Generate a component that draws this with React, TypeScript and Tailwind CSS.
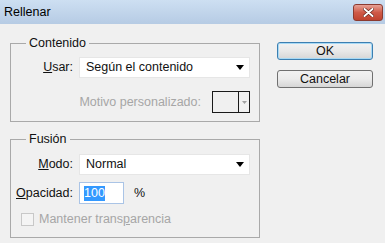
const font = { fontFamily: '"Liberation Sans", Arial, sans-serif' };

function Arrow() {
  return (
    <svg width="8" height="5" viewBox="0 0 8 5" className="shrink-0">
      <path d="M0 0 H8 L4 5 Z" fill="#000" />
    </svg>
  );
}

function Dropdown({ value }: { value: string }) {
  return (
    <div className="flex h-[21px] w-[171px] shrink-0 items-center justify-between border border-[#e6e6e6] bg-white pl-[6px] pr-[5px] text-[12.5px] text-[#111]">
      <span>{value}</span>
      <Arrow />
    </div>
  );
}

function Label({ children }: { children: React.ReactNode }) {
  return <span className="w-[60px] shrink-0 whitespace-nowrap text-right">{children}</span>;
}

function Group({ title, children }: { title: string; children: React.ReactNode }) {
  return (
    <fieldset className="w-[250px] border border-[#a9a9a9] pb-[8px] pl-[2px] pr-[9px]">
      <legend className="ml-[13px] px-[3px] text-[12.5px] leading-[14px] text-[#111]">{title}</legend>
      {children}
    </fieldset>
  );
}

export default function App() {
  return (
    <div className="h-[243px] w-[385px] overflow-hidden bg-[#f0f0f0] text-[12.5px] text-[#111]" style={font}>
      <div className="flex h-[24px] items-center justify-between bg-gradient-to-b from-[#cddff2] to-[#b6cbe4] pl-[4px] pr-[2px]">
        <span className="text-[12.5px] text-black">Rellenar</span>
        <div className="flex h-[17px] w-[30px] items-center justify-center rounded-[3px] border border-[#8b3a30] bg-gradient-to-b from-[#e6a196] via-[#cf5a48] to-[#c0432f]">
          <svg width="11" height="9" viewBox="0 0 11 9">
            <path d="M1.5 1 L9.5 8 M9.5 1 L1.5 8" stroke="#5a1c14" strokeWidth="3.2" strokeLinecap="round" />
            <path d="M1.5 1 L9.5 8 M9.5 1 L1.5 8" stroke="#fff" strokeWidth="2" strokeLinecap="round" />
          </svg>
        </div>
      </div>

      <div className="flex pl-[10px] pt-[12px]">
        <div className="flex flex-col gap-[10px]">
          <Group title="Contenido">
            <div className="mt-[7px] flex items-center gap-[6px]">
              <Label>
                <span className="underline">U</span>sar:
              </Label>
              <Dropdown value="Según el contenido" />
            </div>
            <div className="mt-[13px] flex items-center justify-end gap-[11px]">
              <span className="text-[#a6a6a6]">Motivo personalizado:</span>
              <div className="flex h-[22px] w-[38px] border border-[#1a1a1a] bg-[#f0f0f0]">
                <div className="flex-1" />
                <div className="flex w-[11px] items-center justify-center border-l border-[#1a1a1a]">
                  <svg width="5" height="3" viewBox="0 0 5 3">
                    <path d="M0 0 H5 L2.5 3 Z" fill="#a0a0a0" />
                  </svg>
                </div>
              </div>
            </div>
          </Group>

          <Group title="Fusión">
            <div className="mt-[8px] flex items-center gap-[6px]">
              <Label>
                <span className="underline">M</span>odo:
              </Label>
              <Dropdown value="Normal" />
            </div>
            <div className="mt-[7px] flex items-center gap-[6px]">
              <Label>
                <span className="underline">O</span>pacidad:
              </Label>
              <div className="flex h-[22px] w-[45px] shrink-0 items-center border border-[#aac4e6] bg-white pl-[4px]">
                <span className="bg-[#3399ff] leading-[15px] text-white">100</span>
              </div>
              <span className="ml-[4px]">%</span>
            </div>
            <div className="mt-[6px] flex items-center gap-[5px] pl-[8px] text-[#a6a6a6]">
              <div className="h-[13px] w-[13px] border border-[#c8c8c8] bg-[#f4f4f4]" />
              <span>
                Mantener trans<span className="underline">p</span>arencia
              </span>
            </div>
          </Group>
        </div>

        <div className="ml-[17px] mt-[6px] flex flex-col gap-[10px]">
          <button className="h-[18px] w-[96px] rounded-[3px] border border-[#3c7fb1] bg-gradient-to-b from-[#f2f2f2] via-[#e8e8e8] to-[#d6d6d6] text-[12.5px] leading-none text-[#111] shadow-[inset_0_0_0_1px_#a7d9f5]">
            OK
          </button>
          <button className="h-[18px] w-[96px] rounded-[3px] border border-[#707070] bg-gradient-to-b from-[#f2f2f2] via-[#ebebeb] to-[#d6d6d6] text-[12.5px] leading-none text-[#111]">
            Cancelar
          </button>
        </div>
      </div>
    </div>
  );
}
